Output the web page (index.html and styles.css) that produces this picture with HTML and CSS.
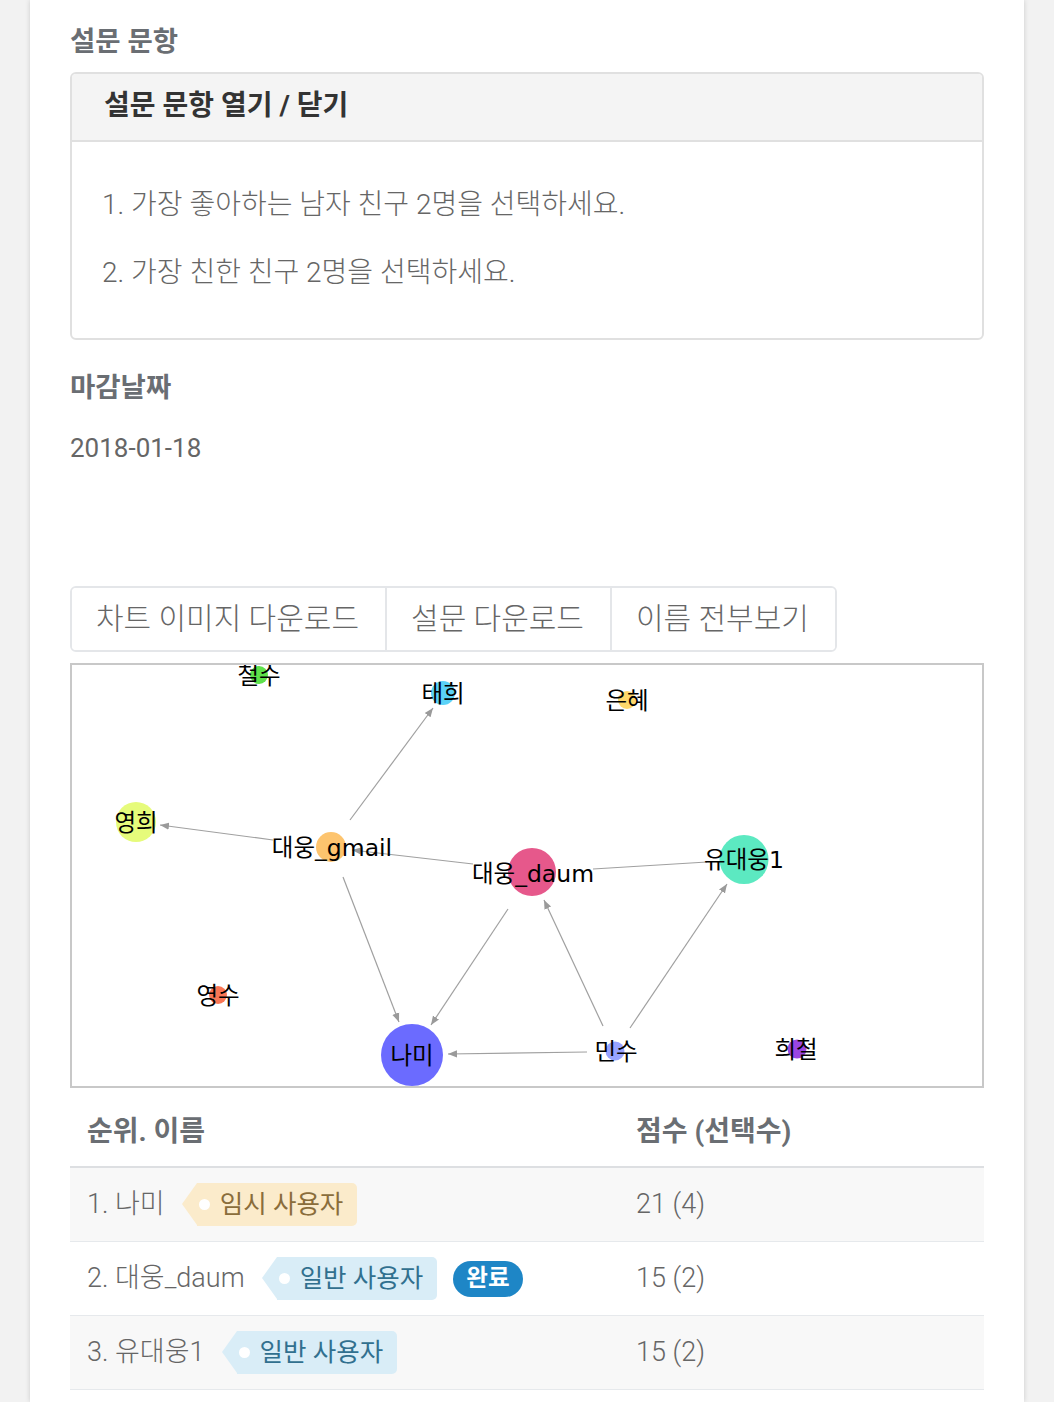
FILE: index.html
```html
<!DOCTYPE html>
<html lang="ko">
<head>
<meta charset="utf-8">
<title>설문 결과</title>
<link rel="stylesheet" href="styles.css">
</head>
<body>
<div class="page">
  <h3 class="section-title">설문 문항</h3>
  <div class="panel">
    <div class="panel-head">설문 문항 열기 / 닫기</div>
    <div class="panel-body">
      <p>1. 가장 좋아하는 남자 친구 2명을 선택하세요.</p>
      <p>2. 가장 친한 친구 2명을 선택하세요.</p>
    </div>
  </div>
  <h3 class="section-title deadline">마감날짜</h3>
  <p class="date">2018-01-18</p>

  <div class="btn-group">
    <button class="btn">차트 이미지 다운로드</button>
    <button class="btn">설문 다운로드</button>
    <button class="btn">이름 전부보기</button>
  </div>

  <div class="chart">
    <svg class="graph" width="910" height="421" viewBox="0 0 910 421">
      <defs>
        <marker id="arr" viewBox="0 0 10 10" refX="10" refY="5" markerWidth="9" markerHeight="9" markerUnits="userSpaceOnUse" orient="auto">
          <path d="M0,1 L10,5 L0,9 z" fill="#9a9a9a"/>
        </marker>
      </defs>
      <g class="edges">
        <line x1="278" y1="155" x2="361" y2="43" marker-end="url(#arr)"/>
        <line x1="201" y1="175" x2="88" y2="160" marker-end="url(#arr)"/>
        <line x1="401" y1="199" x2="280" y2="185" marker-end="url(#arr)"/>
        <line x1="271" y1="212" x2="327" y2="357" marker-end="url(#arr)"/>
        <line x1="436" y1="244" x2="359" y2="360" marker-end="url(#arr)"/>
        <line x1="531" y1="361" x2="472" y2="235" marker-end="url(#arr)"/>
        <line x1="558" y1="363" x2="655" y2="219" marker-end="url(#arr)"/>
        <line x1="515" y1="387" x2="376" y2="389" marker-end="url(#arr)"/>
        <line x1="521" y1="204" x2="635" y2="197"/>
      </g>
      <g class="nodes">
        <circle cx="187" cy="10" r="9" fill="#5fe14b"/>
        <circle cx="371" cy="28" r="12" fill="#5bd2f7"/>
        <circle cx="555" cy="35" r="9" fill="#fed86b"/>
        <circle cx="64" cy="157" r="20" fill="#e6fb7b"/>
        <circle cx="259" cy="182" r="15" fill="#fdc46e"/>
        <circle cx="460" cy="207" r="24" fill="#e6588b"/>
        <circle cx="672" cy="194.5" r="24.5" fill="#5ce9c1"/>
        <circle cx="146" cy="330" r="9" fill="#f97655"/>
        <circle cx="340" cy="390" r="31" fill="#6b6bff"/>
        <circle cx="543" cy="386" r="9.5" fill="#98a3ff"/>
        <circle cx="725" cy="384" r="9.5" fill="#9a46e2"/>
      </g>
      <g class="labels">
        <text x="187" y="11">철수</text>
        <text x="371" y="29">태희</text>
        <text x="555" y="36">은혜</text>
        <text x="64" y="158">영희</text>
        <text x="260" y="183">대웅_gmail</text>
        <text x="461" y="209">대웅_daum</text>
        <text x="672" y="195">유대웅1</text>
        <text x="146" y="331">영수</text>
        <text x="340" y="391">나미</text>
        <text x="544" y="387">민수</text>
        <text x="724" y="385">희철</text>
      </g>
    </svg>
  </div>

  <table class="rank">
    <thead>
      <tr><th class="col-name">순위. 이름</th><th>점수 (선택수)</th></tr>
    </thead>
    <tbody>
      <tr class="odd">
        <td class="col-name"><div class="name-cell"><span>1. 나미</span><span class="tag tag-temp"><i class="dot"></i>임시 사용자</span></div></td>
        <td>21 (4)</td>
      </tr>
      <tr>
        <td class="col-name"><div class="name-cell"><span>2. 대웅_daum</span><span class="tag tag-normal"><i class="dot"></i>일반 사용자</span><span class="badge">완료</span></div></td>
        <td>15 (2)</td>
      </tr>
      <tr class="odd">
        <td class="col-name"><div class="name-cell"><span>3. 유대웅1</span><span class="tag tag-normal"><i class="dot"></i>일반 사용자</span></div></td>
        <td>15 (2)</td>
      </tr>
    </tbody>
  </table>
</div>
</body>
</html>
```

FILE: styles.css
```css
* { box-sizing: border-box; }

html, body {
  margin: 0;
  padding: 0;
  background: #f2f2f2;
}

body {
  font-family: Roboto, "Noto Sans CJK KR", sans-serif;
  color: #666;
}

.page {
  margin-left: 30px;
  width: 994px;
  min-height: 1402px;
  background: #fff;
  box-shadow: 0 0 5px rgba(0, 0, 0, 0.16);
  padding: 24px 40px 0;
}

.section-title {
  margin: 0 0 12px;
  font-size: 27.5px;
  line-height: 36px;
  font-weight: 700;
  color: #6a6e73;
}

.section-title.deadline {
  margin-top: 30px;
  margin-bottom: 24px;
}

.panel {
  border: 2px solid #e0e0e0;
  border-radius: 6px;
  overflow: hidden;
}

.panel-head {
  background: #f4f4f4;
  border-bottom: 2px solid #e0e0e0;
  padding: 14px 32px 16px;
  font-size: 28px;
  line-height: 36px;
  font-weight: 700;
  color: #333;
}

.panel-body {
  padding: 45px 30px 47px;
}

.panel-body p {
  margin: 0 0 32px;
  font-size: 28px;
  line-height: 36px;
  font-weight: 300;
  color: #666;
}

.panel-body p:last-child { margin-bottom: 0; }

.date {
  margin: 0;
  font-size: 26px;
  line-height: 36px;
  color: #666;
}

.btn-group {
  display: inline-flex;
  margin-top: 120px;
  border: 2px solid #e4e6e9;
  border-radius: 6px;
  overflow: hidden;
}

.btn {
  font-family: Roboto, "Noto Sans CJK KR", sans-serif;
  font-size: 30px;
  line-height: 42px;
  font-weight: 300;
  color: #666;
  background: #fff;
  border: 0;
  border-left: 2px solid #e4e6e9;
  padding: 10px 26px 10px 24px;
  margin: 0;
}

.btn:first-child { border-left: 0; }

.chart {
  margin-top: 11px;
  border: 2px solid #c8c8c8;
  height: 425px;
}

.graph { display: block; }

.edges line {
  stroke: #a0a0a0;
  stroke-width: 1.2;
}

.labels text {
  font-family: "DejaVu Sans", "Noto Sans CJK KR", sans-serif;
  font-size: 23.5px;
  fill: #000;
  text-anchor: middle;
  dominant-baseline: central;
}

.rank {
  width: 100%;
  border-collapse: collapse;
  font-size: 27px;
}

.rank th {
  text-align: left;
  font-size: 28px;
  font-weight: 700;
  color: #6a6e73;
  padding: 26px 18px 16px 17px;
  line-height: 36px;
  border-bottom: 2px solid #dddfe2;
}

.rank .col-name { width: 549px; }

.rank td {
  padding: 15px 18px 15px 17px;
  line-height: 43px;
  border-bottom: 1px solid #e6e9ec;
  color: #666;
  font-weight: 300;
}

.rank tr.odd td { background: #f8f8f8; }

.name-cell {
  display: flex;
  align-items: center;
}

.tag {
  position: relative;
  display: inline-flex;
  align-items: center;
  height: 43px;
  margin-left: 32px;
  padding: 0 14px 0 2px;
  border-radius: 0 5px 5px 0;
  font-size: 25.5px;
  font-weight: 400;
}

.tag::before {
  content: "";
  position: absolute;
  left: -15px;
  top: 0;
  border-style: solid;
  border-width: 21.5px 15px 21.5px 0;
  border-color: transparent;
}

.tag-temp { background: #fbebcb; color: #8a6d3b; }
.tag-temp::before { border-right-color: #fbebcb; }

.tag-normal { background: #d9edf7; color: #31708f; }
.tag-normal::before { border-right-color: #d9edf7; }

.dot {
  display: inline-block;
  width: 11px;
  height: 11px;
  border-radius: 50%;
  background: #fff;
  margin-right: 10px;
}

.badge {
  display: inline-flex;
  align-items: center;
  height: 36px;
  margin-left: 16px;
  padding: 0 13px;
  border-radius: 18px;
  background: #1e86c6;
  color: #fff;
  font-size: 23.5px;
  font-weight: 700;
}
```
